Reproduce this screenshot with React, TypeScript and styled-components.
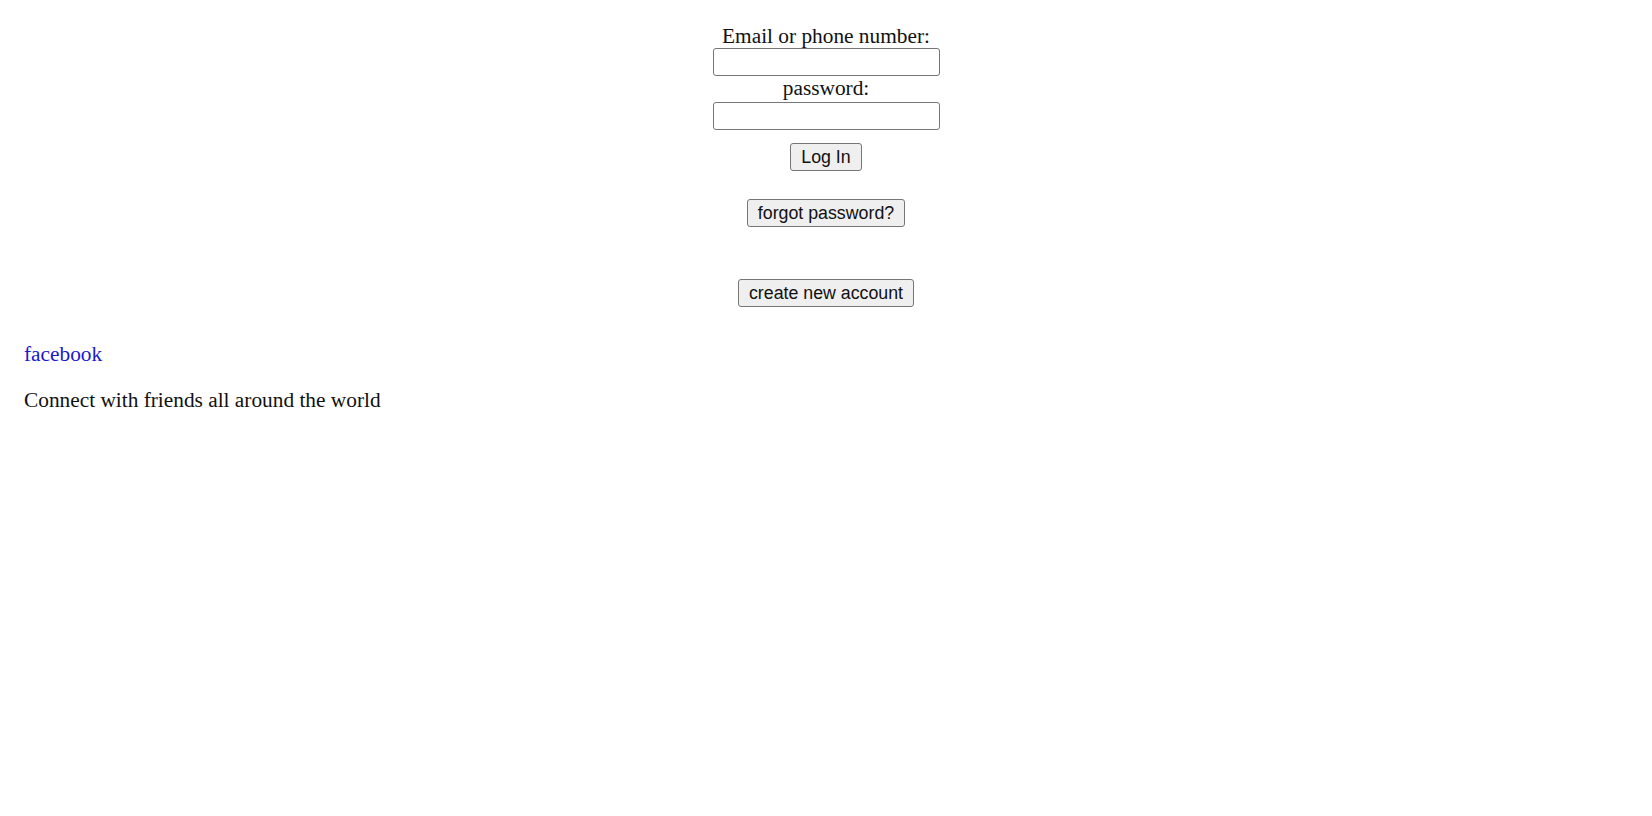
import React from "react";
import styled, { createGlobalStyle } from "styled-components";

const GlobalStyle = createGlobalStyle`
  html, body {
    margin: 0;
    padding: 0;
    background: #ffffff;
  }
  body {
    font-family: "Liberation Serif", "Times New Roman", serif;
    color: #111111;
  }
`;

const Page = styled.div`
  display: flex;
  flex-direction: column;
  width: 100%;
  min-height: 816px;
`;

const LoginForm = styled.form`
  display: flex;
  flex-direction: column;
  align-items: center;
  padding-top: 23.5px;
  margin: 0;
`;

const FieldLabel = styled.label`
  display: block;
  font-family: "Liberation Serif", "Times New Roman", serif;
  font-size: 21.33px;
  line-height: 24.5px;
  height: 24.5px;
  color: #111;
`;

const TextInput = styled.input<{ $gap?: number }>`
  box-sizing: border-box;
  width: 227px;
  height: 28px;
  margin: ${(p) => p.$gap ?? 0}px 0 0 0;
  padding: 1px 3px;
  border: 1px solid #767676;
  border-radius: 3px;
  background: #ffffff;
  font-size: 17.78px;
  font-family: "Liberation Sans", Arial, sans-serif;
  outline: none;
`;

const ActionButton = styled.button<{ $gap: number }>`
  box-sizing: border-box;
  height: 28px;
  margin-top: ${(p) => p.$gap}px;
  padding: 0 10px;
  border: 1px solid #767676;
  border-radius: 3px;
  background: #efefef;
  color: #111;
  font-family: "Liberation Sans", Arial, sans-serif;
  font-size: 17.78px;
  line-height: 20px;
  cursor: pointer;
`;

const Intro = styled.section`
  display: flex;
  flex-direction: column;
  padding: 0 0 0 24px;
  margin-top: 35px;
`;

const Paragraph = styled.p<{ $gap?: number }>`
  margin: ${(p) => p.$gap ?? 0}px 0 0 0;
  font-family: "Liberation Serif", "Times New Roman", serif;
  font-size: 21.33px;
  line-height: 24.5px;
  color: #111;
`;

const BrandLink = styled.a`
  color: #1a1acc;
  text-decoration: none;
`;

export default function App() {
  return (
    <Page>
      <GlobalStyle />
      <LoginForm onSubmit={(e) => e.preventDefault()}>
        <FieldLabel htmlFor="email">Email or phone number:</FieldLabel>
        <TextInput id="email" type="text" />
        <FieldLabel htmlFor="password">password:</FieldLabel>
        <TextInput id="password" type="password" $gap={1} />
        <ActionButton type="submit" $gap={13.5}>Log In</ActionButton>
        <ActionButton type="button" $gap={28}>forgot password?</ActionButton>
        <ActionButton type="button" $gap={52}>create new account</ActionButton>
      </LoginForm>
      <Intro>
        <Paragraph>
          <BrandLink href="#">facebook</BrandLink>
        </Paragraph>
        <Paragraph $gap={21.5}>Connect with friends all around the world</Paragraph>
      </Intro>
    </Page>
  );
}
